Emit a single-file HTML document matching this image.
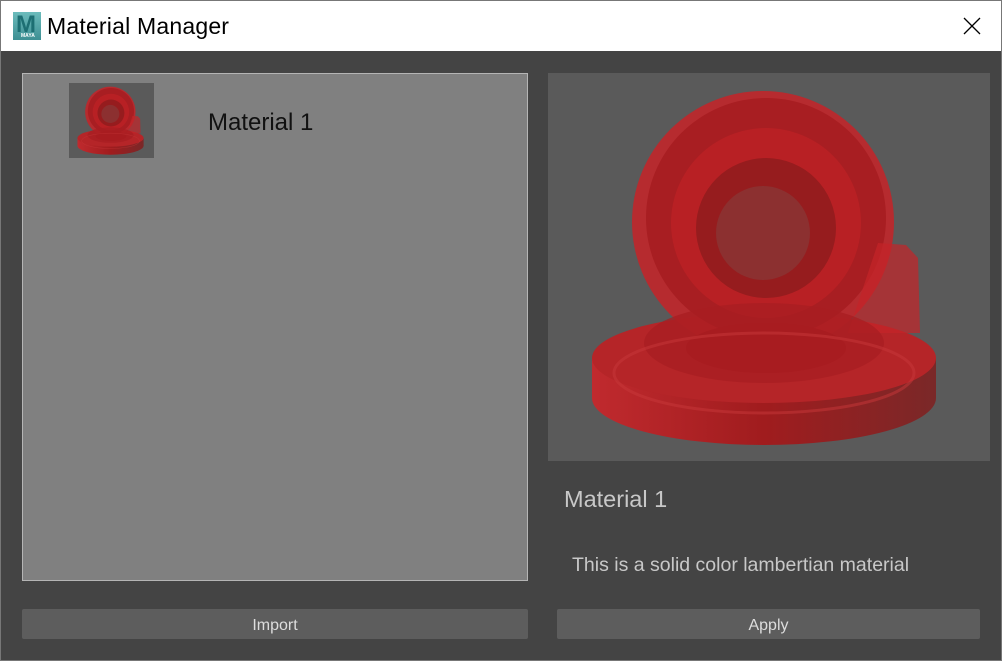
<!DOCTYPE html>
<html><head><meta charset="utf-8"><style>
*{margin:0;padding:0;box-sizing:border-box}
body{width:1002px;height:661px;background:#444;font-family:"Liberation Sans",sans-serif;position:relative;overflow:hidden}
.frame{position:absolute;left:0;top:0;width:1002px;height:661px;border:1px solid #777;pointer-events:none}
.title{position:absolute;left:0;top:0;width:1002px;height:51px;background:#fff}
.title .t{position:absolute;left:47px;top:13px;font-size:23px;color:#000;letter-spacing:0.2px}
.logo{position:absolute;left:13px;top:12px;width:28px;height:28px;background:linear-gradient(#6cbcbc,#3d8f93);}
.logo b{position:absolute;left:3px;top:-1px;font:bold 24px "Liberation Sans",sans-serif;color:#1d6f73}
.logo i{position:absolute;left:8px;top:21px;font:bold 5px sans-serif;color:#fff;font-style:normal}
.close{position:absolute;left:963px;top:17px}
.list{position:absolute;left:22px;top:73px;width:506px;height:508px;background:#808080;border:1px solid #b5b5b5}
.thumb{position:absolute;left:46px;top:9px;width:85px;height:75px;background:#5a5a5a}
.lname{position:absolute;left:185px;top:35px;font-size:24px;color:#111}
.prev{position:absolute;left:548px;top:73px;width:442px;height:388px;background:#5a5a5a}
.h{position:absolute;left:564px;top:486px;font-size:23.5px;color:#c8c8c8}
.d{position:absolute;left:572px;top:554px;font-size:19.5px;color:#c8c8c8}
.btn{position:absolute;top:609px;height:30px;background:#5d5d5d;border-radius:2px;color:#ddd;font-size:16px;text-align:center;line-height:33px}
</style></head><body>
<svg width="0" height="0" style="position:absolute"><defs>
<linearGradient id="g1" x1="0" x2="1"><stop offset="0" stop-color="#c02a2e"/><stop offset="0.5" stop-color="#a01c1e"/><stop offset="1" stop-color="#7a2828"/></linearGradient>
<g id="ball">
<ellipse cx="216" cy="325" rx="172" ry="47" fill="url(#g1)"/>
<rect x="44" y="285" width="344" height="40" fill="url(#g1)"/>
<ellipse cx="216" cy="285" rx="172" ry="45" fill="#b52528"/>
<circle cx="215" cy="149" r="131" fill="#c0262a" opacity="0.9"/>
<circle cx="218" cy="145" r="120" fill="#a81e22"/>
<circle cx="218" cy="150" r="95" fill="#b82024"/>
<circle cx="218" cy="155" r="70" fill="#961c1e"/>
<circle cx="215" cy="160" r="47" fill="#8c3030"/>
<path d="M330 170 L358 172 L370 185 L372 260 L300 260 Z" fill="#c42428" opacity="0.7"/>
<ellipse cx="216" cy="270" rx="120" ry="40" fill="#a81e22" opacity="0.75"/>
<ellipse cx="218" cy="275" rx="80" ry="25" fill="#a81c20"/>
<ellipse cx="216" cy="300" rx="150" ry="40" fill="none" stroke="#c8373a" stroke-width="3" opacity="0.5"/>
</g></defs></svg>
<div class="title"><div class="logo"><b>M</b><i>MAYA</i></div><div class="t">Material Manager</div>
<svg class="close" width="18" height="18"><path d="M1 1L17 17M17 1L1 17" stroke="#000" stroke-width="1.3"/></svg></div>
<div class="list"><div class="thumb"><svg width="85" height="75" viewBox="0 0 442 388"><use href="#ball"/></svg></div><div class="lname">Material 1</div></div>
<div class="prev"><svg width="442" height="388" viewBox="0 0 442 388"><use href="#ball"/></svg></div>
<div class="h">Material 1</div>
<div class="d">This is a solid color lambertian material</div>
<div class="btn" style="left:22px;width:506px">Import</div>
<div class="btn" style="left:557px;width:423px">Apply</div>
<div class="frame"></div>
</body></html>
